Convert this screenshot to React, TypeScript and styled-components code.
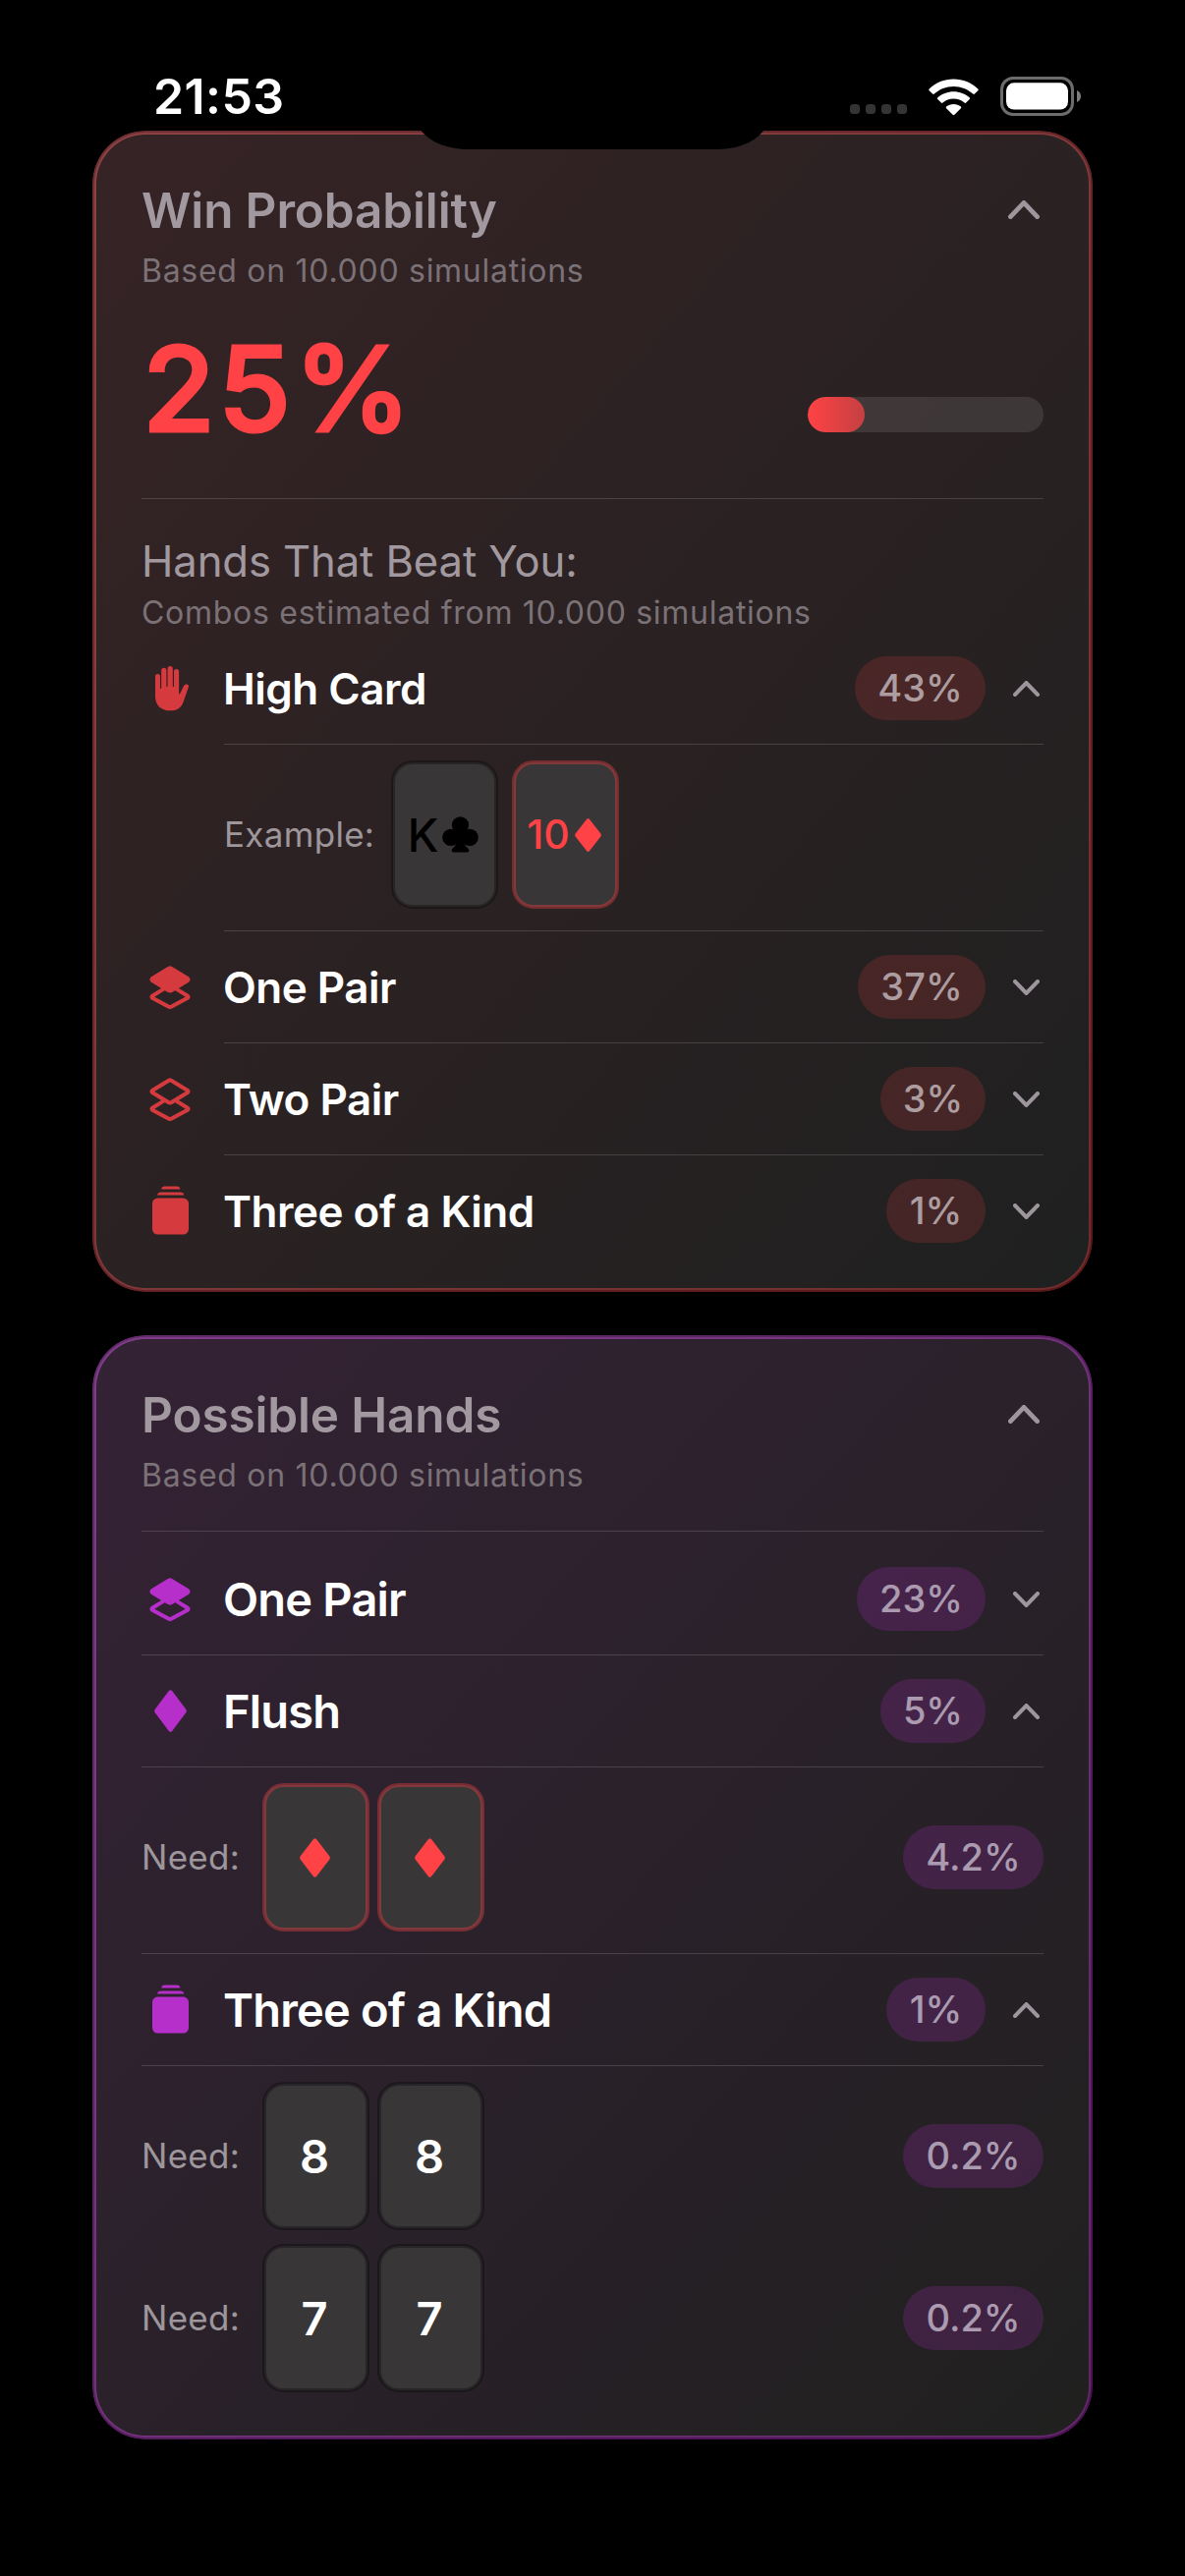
import React from "react";
import styled, { createGlobalStyle } from "styled-components";

const RED = "#ff4245";

const GlobalStyle = createGlobalStyle`
  * { box-sizing: border-box; }
  html, body { margin: 0; padding: 0; background: #000; }
  body { font-family: Inter, "Liberation Sans", sans-serif; -webkit-font-smoothing: antialiased; }
`;

type Tone = "red" | "purple";

const tones = {
  red: {
    from: "#362325",
    to: "#1f2020",
    strokeFrom: "rgba(240, 104, 108, 0.46)",
    strokeTo: "rgba(255, 66, 69, 0.36)",
    icon: "#d53b3e",
    pill: "rgba(255, 66, 69, 0.16)",
    pillText: "#ad9da1",
  },
  purple: {
    from: "#342235",
    to: "#20201f",
    strokeFrom: "rgba(214, 96, 232, 0.46)",
    strokeTo: "rgba(219, 52, 242, 0.34)",
    icon: "#b72fca",
    pill: "rgba(219, 52, 242, 0.16)",
    pillText: "#ab9bb0",
  },
};

const Screen = styled.main`
  position: relative;
  width: 1206px;
  height: 2622px;
  background: #000;
  overflow: hidden;
`;

const StatusBar = styled.header`
  height: 135px;
  padding: 60px 105px 0 156px;
  display: flex;
  justify-content: space-between;
  align-items: flex-start;
`;

const Clock = styled.time`
  font-size: 50px;
  line-height: 76px;
  font-weight: 600;
  letter-spacing: 0.4px;
  color: #fff;
`;

const StatusIcons = styled.div`
  display: flex;
  align-items: flex-end;
  height: 58px;
  gap: 22px;
`;

const SignalDots = styled.div`
  display: flex;
  gap: 6px;
  padding-bottom: 2px;
`;

const Dot = styled.span`
  width: 10px;
  height: 10px;
  border-radius: 3.5px;
  background: #343434;
`;

const Notch = styled.svg`
  position: absolute;
  left: 420px;
  top: 120px;
  width: 366px;
  height: 34px;
`;

const Stack = styled.div`
  display: flex;
  flex-direction: column;
  gap: 48px;
  padding: 0 96px;
`;

const Panel = styled.section<{ $tone: Tone; $bottom: number }>`
  position: relative;
  padding: 48px 48px ${(p) => p.$bottom}px;
  border-radius: 52px;
  background: linear-gradient(to bottom right, ${(p) => tones[p.$tone].from}, ${(p) => tones[p.$tone].to});
  &::after {
    content: "";
    position: absolute;
    inset: -2px;
    padding: 4px;
    border-radius: 54px;
    background: linear-gradient(to bottom right, ${(p) => tones[p.$tone].strokeFrom}, ${(p) => tones[p.$tone].strokeTo});
    mask: linear-gradient(#000 0 0) content-box exclude, linear-gradient(#000 0 0);
    pointer-events: none;
  }
`;

const PanelHeader = styled.div`
  height: 61px;
  display: flex;
  align-items: center;
  justify-content: space-between;
  padding-right: 4px;
`;

const Title = styled.h1`
  margin: 0;
  font-size: 49.5px;
  line-height: 62px;
  font-weight: 600;
  letter-spacing: -0.15px;
  color: #a1999f;
  white-space: nowrap;
`;

const Caption = styled.p<{ $top: number; $bottom?: number }>`
  margin: ${(p) => p.$top}px 0 ${(p) => p.$bottom ?? 0}px;
  font-size: 32px;
  line-height: 39px;
  letter-spacing: 0.72px;
  color: #7b7277;
  white-space: nowrap;
`;

const Headline = styled.div`
  display: flex;
  align-items: flex-end;
  justify-content: space-between;
  height: 151px;
  margin: 25px 0 36px;
`;

const BigPercent = styled.div`
  padding-left: 1px;
  font-size: 120px;
  line-height: 150px;
  font-weight: 500;
  letter-spacing: 3px;
  color: ${RED};
  -webkit-text-stroke: 3px ${RED};
  stroke-linejoin: round;
`;

const Track = styled.div`
  width: 240px;
  height: 36px;
  margin-bottom: 31px;
  border-radius: 18px;
  background: rgba(255, 255, 255, 0.1);
  overflow: hidden;
`;

const Fill = styled.div`
  height: 100%;
  border-radius: 18px;
  background: linear-gradient(90deg, ${RED}, #c44042);
`;

const Divider = styled.hr<{ $inset?: boolean }>`
  height: 1px;
  border: 0;
  margin: 0 0 0 ${(p) => (p.$inset ? 84 : 0)}px;
  background: rgba(255, 255, 255, 0.15);
`;

const Subheading = styled.h2`
  margin: 36px 0 0;
  font-size: 43.6px;
  line-height: 55px;
  height: 54px;
  font-weight: 400;
  letter-spacing: -0.1px;
  color: #a1999f;
  white-space: nowrap;
`;

const HandRow = styled.div<{ $tone: Tone; $top?: number }>`
  height: 113px;
  margin-top: ${(p) => p.$top ?? 0}px;
  padding-right: 4px;
  display: flex;
  align-items: center;
  color: ${(p) => tones[p.$tone].icon};
`;

const IconSlot = styled.span`
  width: 58px;
  margin-right: 25px;
  display: flex;
  justify-content: center;
`;

const HandName = styled.span<{ $large: boolean }>`
  flex: 1;
  font-size: ${(p) => (p.$large ? 47 : 44)}px;
  line-height: 60px;
  font-weight: 600;
  letter-spacing: ${(p) => (p.$large ? -0.8 : -0.5)}px;
  color: #fff;
  white-space: nowrap;
`;

const Pill = styled.span<{ $tone: Tone; $width: number; $gap?: number }>`
  width: ${(p) => p.$width}px;
  height: 65px;
  margin-right: ${(p) => p.$gap ?? 0}px;
  border-radius: 32.5px;
  background: ${(p) => tones[p.$tone].pill};
  color: ${(p) => tones[p.$tone].pillText};
  font-size: 38px;
  line-height: 65px;
  font-weight: 500;
  text-align: center;
  white-space: nowrap;
`;

const DetailRow = styled.div<{ $inset?: boolean; $bottom: number }>`
  display: flex;
  align-items: center;
  padding: 18px 0 ${(p) => p.$bottom}px ${(p) => (p.$inset ? 84 : 0)}px;
`;

const DetailLabel = styled.span<{ $width: number }>`
  width: ${(p) => p.$width}px;
  font-size: 35px;
  line-height: 44px;
  margin-top: -2px;
  letter-spacing: 0.3px;
  color: #9d969b;
  white-space: nowrap;
`;

const Cards = styled.div<{ $gap: number }>`
  flex: 1;
  display: flex;
  gap: ${(p) => p.$gap}px;
`;

const PlayingCard = styled.span<{ $red?: boolean; $ink: string; $size: number; $gap?: number; $weight?: number }>`
  position: relative;
  width: 105px;
  height: 147px;
  border-radius: 20px;
  padding-right: 3px;
  display: flex;
  align-items: center;
  justify-content: center;
  gap: ${(p) => p.$gap ?? 0}px;
  background: rgba(58, 56, 57, 0.93);
  color: ${(p) => p.$ink};
  font-size: ${(p) => p.$size}px;
  line-height: 1;
  font-weight: ${(p) => p.$weight ?? 600};
  &::after {
    content: "";
    position: absolute;
    inset: -2px;
    border-radius: 22px;
    border: 4px solid ${(p) => (p.$red ? "rgba(255, 66, 69, 0.36)" : "rgba(0, 0, 0, 0.3)")};
  }
`;

function Chevron({ up, large }: { up?: boolean; large?: boolean }) {
  const w = large ? 32 : 27;
  const h = large ? 19 : 16;
  const m = large ? 2.4 : 2.1;
  const d = up ? `M${m} ${h - m}L${w / 2} ${m}L${w - m} ${h - m}` : `M${m} ${m}L${w / 2} ${h - m}L${w - m} ${m}`;
  return (
    <svg width={w} height={h} viewBox={`0 0 ${w} ${h}`} fill="none">
      <path d={d} stroke="#9d969c" strokeWidth={m * 2} strokeLinecap="round" strokeLinejoin="round" />
    </svg>
  );
}

function PalmIcon() {
  return (
    <svg width="39" height="46" viewBox="-4 0 39 46" fill="currentColor">
      <path d="M0 10.6a2.5 2.5 0 0 1 5 0V22.200a.6.6 0 0 0 1.200 0V4.300a2.600 2.600 0 0 1 5.200 0V20.400a.6.6 0 0 0 1.200 0V2.700a2.600 2.600 0 0 1 5.200 0V20.400a.6.6 0 0 0 1.200 0V5.600a2.550 2.550 0 0 1 5.100 0V27.400c0 1.2.7 1.3 1.200.3L29 20.200C30.400 17.400 34.700 18.200 33.900 21.200L28.600 36.400C26.400 42.600 22 45.300 15.300 45.300C5.600 45.300 0 39.600 0 30.400Z" />
    </svg>
  );
}

function LayersIcon({ filled }: { filled?: boolean }) {
  return (
    <svg width="44" height="46" viewBox="0 0 44 46" fill="none" stroke="currentColor" strokeWidth="4" strokeLinejoin="round" strokeLinecap="round">
      <path
        d="M20.8 3.8Q22 3 23.2 3.8L40 14Q41.2 15 40 16L23.2 26.2Q22 27 20.8 26.2L4 16Q2.8 15 4 14Z"
        fill={filled ? "currentColor" : "none"}
      />
      <path d="M15.6 24.6L4 31.7Q2.8 32.7 4 33.7L20.8 42.7Q22 43.5 23.2 42.7L40 33.7Q41.2 32.7 40 31.7L28.4 24.6" />
    </svg>
  );
}

function StackIcon() {
  return (
    <svg width="37" height="52" viewBox="0 0 37 52" fill="currentColor">
      <path d="M9.2 3.4Q9.6.4 12.4.4H25.2Q28 .4 28.4 3.4Z" />
      <path d="M5 9.6Q5.6 6.4 8.8 6.4H28.6Q31.8 6.4 32.4 9.6Z" />
      <rect x="0" y="12.6" width="37" height="37" rx="5.5" />
    </svg>
  );
}

function Diamond({ w, h }: { w: number; h: number }) {
  return (
    <svg width={w} height={h} viewBox="0 0 33 43" preserveAspectRatio="none" fill="currentColor">
      <path d="M14.9 1Q16.5-.7 18.1 1L32.2 19.7Q33.4 21.5 32.2 23.3L18.1 42Q16.5 43.7 14.9 42L.8 23.3Q-.4 21.5.8 19.7Z" />
    </svg>
  );
}

function Club() {
  return (
    <svg width="37" height="37" viewBox="0 0 37 37" fill="currentColor">
      <circle cx="18.5" cy="8.8" r="8.6" />
      <circle cx="8.9" cy="21.4" r="8.7" />
      <circle cx="28.1" cy="21.4" r="8.7" />
      <path d="M15.500 15H21.500L21.500 22C21.500 27 23 29.500 26 32.200C28.400 34.300 27.200 36.600 25 36.600H12C9.800 36.600 8.600 34.300 11 32.200C14 29.500 15.500 27 15.500 22Z" />
    </svg>
  );
}

function Wifi() {
  return (
    <svg width="51" height="38" viewBox="0 0 51 38" fill="#fff">
      <path d="M25.5 .6C35 .6 43.8 4.3 50.3 10.4Q51.2 11.3 50.3 12.2L46.9 15.6Q46.1 16.4 45.2 15.6C40 10.8 33 8 25.5 8S11 10.8 5.8 15.6Q4.9 16.4 4.1 15.6L.7 12.2Q-.2 11.3.7 10.4C7.2 4.3 16 .6 25.5 .6Z" />
      <path d="M25.5 13.2C31.7 13.2 37.4 15.5 41.7 19.3Q42.6 20.2 41.7 21.1L38.2 24.5Q37.4 25.3 36.5 24.6C33.5 22.1 29.7 20.6 25.5 20.6S17.5 22.1 14.5 24.6Q13.6 25.3 12.8 24.5L9.3 21.1Q8.4 20.2 9.3 19.3C13.6 15.5 19.3 13.2 25.5 13.2Z" />
      <path d="M25.5 25.9C28.3 25.9 30.9 26.9 32.9 28.5Q33.8 29.3 32.9 30.2L26.4 36.7Q25.5 37.6 24.6 36.7L18.1 30.2Q17.2 29.3 18.1 28.5C20.1 26.9 22.7 25.9 25.5 25.9Z" />
    </svg>
  );
}

function Battery() {
  return (
    <svg width="83" height="40" viewBox="0 0 83 40">
      <rect x="1.5" y="1.5" width="72" height="37" rx="11.5" fill="none" stroke="#6c6c6c" strokeWidth="3" />
      <rect x="6" y="6.3" width="63" height="27.3" rx="8" fill="#fff" />
      <path d="M78 14C80.5 15 82 17.2 82 20S80.5 25 78 26Z" fill="#7c7c7c" />
    </svg>
  );
}

type Glyph = "palm" | "one" | "two" | "stack" | "diamond";

const glyphs: Record<Glyph, React.ReactNode> = {
  palm: <PalmIcon />,
  one: <LayersIcon filled />,
  two: <LayersIcon />,
  stack: <StackIcon />,
  diamond: <Diamond w={33} h={43} />,
};

interface HandProps {
  tone: Tone;
  icon: Glyph;
  name: string;
  value: string;
  pill: number;
  open?: boolean;
  top?: number;
}

function Hand({ tone, icon, name, value, pill, open, top }: HandProps) {
  return (
    <HandRow $tone={tone} $top={top}>
      <IconSlot>{glyphs[icon]}</IconSlot>
      <HandName $large={tone === "purple"}>{name}</HandName>
      <Pill $tone={tone} $width={pill} $gap={28}>{value}</Pill>
      <Chevron up={open} />
    </HandRow>
  );
}

function Need({ cards, value, bottom }: { cards: React.ReactNode[]; value: string; bottom: number }) {
  return (
    <DetailRow $bottom={bottom}>
      <DetailLabel $width={125}>Need:</DetailLabel>
      <Cards $gap={12}>{cards}</Cards>
      <Pill $tone="purple" $width={143}>{value}</Pill>
    </DetailRow>
  );
}

const suitCard = (key: string) => (
  <PlayingCard key={key} $red $ink={RED} $size={47}>
    <Diamond w={31} h={40} />
  </PlayingCard>
);

const rankCard = (key: string, rank: string) => (
  <PlayingCard key={key} $ink="#fff" $size={47}>{rank}</PlayingCard>
);

export default function App() {
  return (
    <>
      <GlobalStyle />
      <Screen>
        <StatusBar>
          <Clock>21:53</Clock>
          <StatusIcons>
            <SignalDots>
              <Dot /><Dot /><Dot /><Dot />
            </SignalDots>
            <Wifi />
            <Battery />
          </StatusIcons>
        </StatusBar>
        <Stack>
          <Panel $tone="red" $bottom={24}>
            <PanelHeader>
              <Title>Win Probability</Title>
              <Chevron up large />
            </PanelHeader>
            <Caption $top={12}>Based on 10.000 simulations</Caption>
            <Headline>
              <BigPercent>25%</BigPercent>
              <Track><Fill style={{ width: `${58 / 2.4}%` }} /></Track>
            </Headline>
            <Divider />
            <Subheading>Hands That Beat You:</Subheading>
            <Caption $top={6}>Combos estimated from 10.000 simulations</Caption>
            <Hand tone="red" icon="palm" name="High Card" value="43%" pill={133} open top={1} />
            <Divider $inset />
            <DetailRow $inset $bottom={24}>
              <DetailLabel $width={172}>Example:</DetailLabel>
              <Cards $gap={18}>
                <PlayingCard $ink="#000" $size={46} $gap={4} $weight={500}>K<Club /></PlayingCard>
                <PlayingCard $red $ink={RED} $size={41} $gap={5} $weight={500}>10<Diamond w={27} h={34} /></PlayingCard>
              </Cards>
            </DetailRow>
            <Divider $inset />
            <Hand tone="red" icon="one" name="One Pair" value="37%" pill={130} />
            <Divider $inset />
            <Hand tone="red" icon="two" name="Two Pair" value="3%" pill={107} />
            <Divider $inset />
            <Hand tone="red" icon="stack" name="Three of a Kind" value="1%" pill={101} />
          </Panel>
          <Panel $tone="purple" $bottom={48}>
            <PanelHeader>
              <Title>Possible Hands</Title>
              <Chevron up large />
            </PanelHeader>
            <Caption $top={12} $bottom={37}>Based on 10.000 simulations</Caption>
            <Divider />
            <Hand tone="purple" icon="one" name="One Pair" value="23%" pill={131} top={12} />
            <Divider />
            <Hand tone="purple" icon="diamond" name="Flush" value="5%" pill={107} open />
            <Divider />
            <Need cards={[suitCard("a"), suitCard("b")]} value="4.2%" bottom={24} />
            <Divider />
            <Hand tone="purple" icon="stack" name="Three of a Kind" value="1%" pill={101} open />
            <Divider />
            <Need cards={[rankCard("a", "8"), rankCard("b", "8")]} value="0.2%" bottom={0} />
            <Need cards={[rankCard("a", "7"), rankCard("b", "7")]} value="0.2%" bottom={0} />
          </Panel>
        </Stack>
        <Notch viewBox="420 120 366 34">
          <path d="M420 120V126C424 128 426 130 428 132.5C438 144 452 152 480 152H726C754 152 768 144 777.5 132.5C780 130 782 128 786 126V120Z" fill="#000" />
        </Notch>
      </Screen>
    </>
  );
}
